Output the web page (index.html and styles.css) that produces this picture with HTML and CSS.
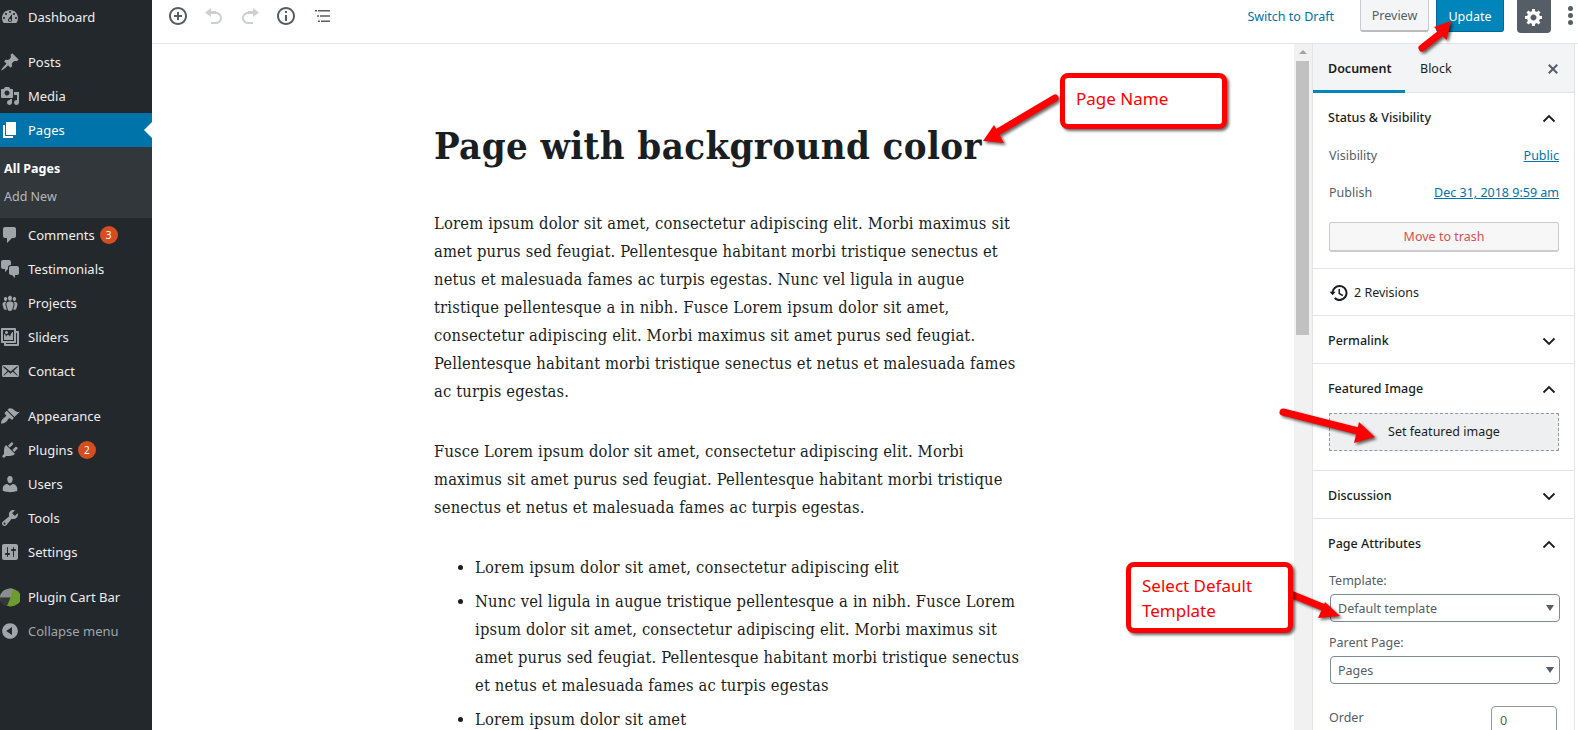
FILE: index.html
```html
<!DOCTYPE html>
<html lang="en">
<head>
<meta charset="utf-8">
<title>Edit Page</title>
<link rel="stylesheet" href="styles.css">
</head>
<body>
<div class="app">
  <nav class="side">
    <a class="mi"><svg class="ic" viewBox="0 0 20 20"><path d="M3.76 16h12.48c1.1-1.37 1.76-3.11 1.76-5 0-4.42-3.58-8-8-8s-8 3.58-8 8c0 1.89.66 3.63 1.76 5zM10 4c.55 0 1 .45 1 1s-.45 1-1 1-1-.45-1-1 .45-1 1-1zM6 6c.55 0 1 .45 1 1s-.45 1-1 1-1-.45-1-1 .45-1 1-1zm8 0c.55 0 1 .45 1 1s-.45 1-1 1-1-.45-1-1 .45-1 1-1zm-5.37 5.55L12 7v6c0 1.1-.9 2-2 2s-2-.9-2-2c0-.57.24-1.08.63-1.45zM4 10c.55 0 1 .45 1 1s-.45 1-1 1-1-.45-1-1 .45-1 1-1zm12 0c.55 0 1 .45 1 1s-.45 1-1 1-1-.45-1-1 .45-1 1-1zm-5 3c0-.55-.45-1-1-1s-1 .45-1 1 .45 1 1 1 1-.45 1-1z"/></svg><span>Dashboard</span></a>
    <a class="mi sep"><svg class="ic" viewBox="0 0 20 20"><path d="M10.44 3.02l1.82-1.82 6.36 6.35-1.83 1.82c-1.05-.68-2.48-.57-3.41.36l-.75.75c-.92.93-1.04 2.35-.35 3.41l-1.83 1.82-2.41-2.41-2.8 2.79c-.42.42-3.38 2.71-3.8 2.29s1.86-3.39 2.28-3.81l2.79-2.79L4.1 9.36l1.83-1.82c1.05.69 2.48.57 3.4-.36l.75-.75c.93-.92 1.05-2.35.36-3.41z"/></svg><span>Posts</span></a>
    <a class="mi"><svg class="ic" viewBox="0 0 20 20"><path d="M13 11V4c0-.55-.45-1-1-1h-1.67L9 1H5L3.67 3H2c-.55 0-1 .45-1 1v7c0 .55.45 1 1 1h10c.55 0 1-.45 1-1zM7 4.5c1.38 0 2.5 1.12 2.5 2.5S8.38 9.5 7 9.5 4.5 8.38 4.5 7 5.62 4.5 7 4.5zM14 6h5v10.5c0 1.38-1.12 2.5-2.5 2.5S14 17.88 14 16.5s1.12-2.5 2.5-2.5c.17 0 .34.02.5.05V9h-3V6zm-4 8.05V13h2v3.5c0 1.38-1.12 2.5-2.5 2.5S7 17.88 7 16.5 8.12 14 9.5 14c.17 0 .34.02.5.05z"/></svg><span>Media</span></a>
    <a class="mi cur"><svg class="ic" viewBox="0 0 20 20"><path d="M6 15V2h10v13H6zm-1 1h8v2H3V5h2v11z"/></svg><span>Pages</span></a>
    <div class="sub"><a class="si on">All Pages</a><a class="si">Add New</a></div>
    <a class="mi"><svg class="ic" viewBox="0 0 20 20"><path d="M5 2h9c1.1 0 2 .9 2 2v7c0 1.1-.9 2-2 2h-2l-5 5v-5H5c-1.1 0-2-.9-2-2V4c0-1.1.9-2 2-2z"/></svg><span>Comments</span><b class="badge">3</b></a>
    <a class="mi"><svg class="ic" viewBox="0 0 20 20"><path d="M11 6h-.82C9.07 6 8 7.2 8 8.16V10l-3 3v-3H3c-1.1 0-2-.9-2-2V3c0-1.1.9-2 2-2h6c1.1 0 2 .9 2 2v3zm0 1h6c1.1 0 2 .9 2 2v5c0 1.1-.9 2-2 2h-2v3l-3-3h-1c-1.1 0-2-.9-2-2V9c0-1.1.9-2 2-2z"/></svg><span>Testimonials</span></a>
    <a class="mi"><svg class="ic" viewBox="0 0 20 20"><path d="M8.03 4.46c-.29 1.28.55 3.46 1.97 3.46 1.41 0 2.25-2.18 1.96-3.46-.22-.98-1.08-1.63-1.96-1.63-.89 0-1.74.65-1.97 1.63zm-4.13.9c-.25 1.08.47 2.93 1.67 2.93s1.92-1.85 1.67-2.93c-.19-.83-.92-1.39-1.67-1.39s-1.48.56-1.67 1.39zm8.86 0c-.25 1.08.47 2.93 1.66 2.93 1.2 0 1.92-1.85 1.67-2.93-.19-.83-.92-1.39-1.67-1.39-.74 0-1.47.56-1.66 1.39zm-.59 11.43l1.25-4.3C14.2 10 12.71 8.47 10 8.47c-2.72 0-4.21 1.53-3.44 4.02l1.26 4.3C8.05 17.51 9 18 10 18c.98 0 1.94-.49 2.17-1.21zm-6.1-7.63c-.49.67-.96 1.83-.42 3.59l1.12 3.79c-.34.2-.77.31-1.2.31-.85 0-1.65-.41-1.85-1.03l-1.07-3.65c-.65-2.11.61-3.4 2.92-3.4.27 0 .54.02.79.06-.1.1-.2.22-.29.33zm8.35-.39c2.31 0 3.58 1.29 2.92 3.4l-1.07 3.65c-.2.62-1 1.03-1.85 1.03-.43 0-.86-.11-1.2-.31l1.11-3.77c.55-1.78.08-2.94-.42-3.61-.08-.11-.18-.23-.28-.33.25-.04.51-.06.79-.06z"/></svg><span>Projects</span></a>
    <a class="mi"><svg class="ic" viewBox="0 0 20 20"><path d="M16 4h1.96c.57 0 1.04.47 1.04 1.04v12.92c0 .57-.47 1.04-1.04 1.04H5.04C4.47 19 4 18.53 4 17.96V16H2.04C1.47 16 1 15.53 1 14.96V2.04C1 1.47 1.47 1 2.04 1h12.92c.57 0 1.04.47 1.04 1.04V4zM3 14h11V3H3v11zm5-8.5C8 4.67 7.33 4 6.5 4S5 4.67 5 5.5 5.67 7 6.5 7 8 6.33 8 5.5zm2 4.5s1-5 3-5v8H4V7c2 0 2 3 2 3s.33-2 2-2 2 2 2 2zm7 7V6h-1v8.96c0 .57-.47 1.04-1.04 1.04H6v1h11z"/></svg><span>Sliders</span></a>
    <a class="mi"><svg class="ic" viewBox="0 0 20 20"><path d="M19 14.5v-9c0-.83-.67-1.5-1.5-1.5H3.49c-.83 0-1.5.67-1.5 1.5v9c0 .83.67 1.5 1.5 1.5H17.5c.83 0 1.5-.67 1.5-1.5zm-1.31-9.11c.33.33.15.67-.03.84L13.6 9.95l3.9 4.06c.12.14.2.36.06.51-.13.16-.43.15-.56.05l-4.37-3.73-2.14 1.95-2.13-1.95-4.37 3.73c-.13.1-.43.11-.56-.05-.14-.15-.06-.37.06-.51l3.9-4.06-4.06-3.72c-.18-.17-.36-.51-.03-.84s.67-.17.95.07l6.24 5.04 6.25-5.04c.28-.24.62-.4.95-.07z"/></svg><span>Contact</span></a>
    <a class="mi sep"><svg class="ic" viewBox="0 0 20 20"><path d="M14.48 11.06L7.41 3.99l1.5-1.5c.5-.56 2.3-.47 3.51.32 1.21.8 1.43 1.28 2.91 2.1 1.18.64 2.45 1.26 4.45.85zm-.71.71L6.7 4.7 4.93 6.47c-.39.39-.39 1.02 0 1.41l1.06 1.06c.39.39.39 1.03 0 1.42-.6.6-1.43 1.11-2.21 1.69-.35.26-.7.53-1.01.84C1.43 13.71 1 16.2 1 17.5c1.3 0 3.79-.43 5.28-1.78.31-.31.58-.66.84-1.01.58-.78 1.09-1.61 1.69-2.21.39-.39 1.03-.39 1.42 0l1.06 1.06c.39.39 1.02.39 1.41 0z"/></svg><span>Appearance</span></a>
    <a class="mi"><svg class="ic" viewBox="0 0 20 20"><path d="M13.11 4.36L9.87 7.6 8 5.73l3.24-3.24c.35-.34 1.05-.2 1.56.32.52.51.66 1.21.31 1.55zm-8 1.77l.91-1.12 9.01 9.01-1.19.84c-.71.71-2.63 1.16-3.82 1.16H6.14L4.9 17.26c-.59.59-1.54.59-2.12 0-.59-.58-.59-1.53 0-2.12l1.24-1.24v-3.88c0-1.13.4-3.19 1.09-3.89zm7.26 3.97l3.24-3.24c.34-.35 1.04-.21 1.55.31.52.51.66 1.21.31 1.55l-3.24 3.25z"/></svg><span>Plugins</span><b class="badge">2</b></a>
    <a class="mi"><svg class="ic" viewBox="0 0 20 20"><path d="M10 9.25c-2.27 0-2.73-3.44-2.73-3.44C7 4.02 7.82 2 9.97 2c2.16 0 2.98 2.02 2.71 3.81 0 0-.41 3.44-2.68 3.44zm0 2.57L12.72 10c2.39 0 4.52 2.33 4.52 4.53v2.49s-3.65 1.13-7.24 1.13c-3.65 0-7.24-1.13-7.24-1.13v-2.49c0-2.25 1.94-4.48 4.47-4.48z"/></svg><span>Users</span></a>
    <a class="mi"><svg class="ic" viewBox="0 0 20 20"><path d="M16.68 9.77c-1.34 1.34-3.3 1.67-4.95.99l-5.41 6.52c-.99.99-2.59.99-3.58 0s-.99-2.59 0-3.57l6.52-5.42c-.68-1.65-.35-3.61.99-4.95 1.28-1.28 3.12-1.62 4.72-1.06l-2.89 2.89 2.82 2.82 2.86-2.87c.53 1.58.18 3.39-1.08 4.65zM3.81 16.21c.4.39 1.04.39 1.43 0 .4-.4.4-1.04 0-1.43-.39-.4-1.03-.4-1.43 0-.39.39-.39 1.03 0 1.43z"/></svg><span>Tools</span></a>
    <a class="mi"><svg class="ic" viewBox="0 0 20 20"><path d="M18 16V4c0-1.1-.9-2-2-2H4c-1.1 0-2 .9-2 2v12c0 1.1.9 2 2 2h12c1.1 0 2-.9 2-2zM8 11h1c.55 0 1 .45 1 1s-.45 1-1 1H8v1.5c0 .28-.22.5-.5.5s-.5-.22-.5-.5V13H6c-.55 0-1-.45-1-1s.45-1 1-1h1V5.5c0-.28.22-.5.5-.5s.5.22.5.5V11zm5-2h-1c-.55 0-1-.45-1-1s.45-1 1-1h1V5.5c0-.28.22-.5.5-.5s.5.22.5.5V7h1c.55 0 1 .45 1 1s-.45 1-1 1h-1v5.5c0 .28-.22.5-.5.5s-.5-.22-.5-.5V9z"/></svg><span>Settings</span></a>
    <a class="mi sep"><svg class="ic" viewBox="0 0 20 20"><ellipse cx="10.500" cy="10.500" rx="10.500" ry="9" fill="#6d9b2f"/><path d="M10.500 10.500 13 1.800A10.500 9 0 0 0 0 10.500z" fill="#8a8e91"/><path d="M0 10.500 10.500 10.500 7 19A10.500 9 0 0 1 0 10.500z" fill="#33373a"/></svg><span>Plugin Cart Bar</span></a>
    <a class="mi dim"><svg class="ic" viewBox="0 0 20 20"><path d="M10 2.160c4.330 0 7.840 3.510 7.840 7.840s-3.510 7.840-7.840 7.840S2.160 14.330 2.160 10 5.710 2.160 10 2.160zm2 11.720V6.120L6.180 9.970z"/></svg><span>Collapse menu</span></a>
  </nav>
  <div class="main">
    <header class="top">
      <div class="tools">
        <svg class="tb" viewBox="0 0 20 20"><path d="M10 1c-5 0-9 4-9 9s4 9 9 9 9-4 9-9-4-9-9-9zm0 16c-3.900 0-7-3.100-7-7s3.100-7 7-7 7 3.100 7 7-3.100 7-7 7zm1-11H9v3H6v2h3v3h2v-3h3V9h-3V6z"/></svg>
        <svg class="tb off" viewBox="0 0 20 20"><path d="M12 5H7V2L1 6.500 7 11V8h5c2.200 0 4 1.800 4 4s-1.800 4-4 4H7v2h5c3.300 0 6-2.700 6-6s-2.700-6-6-6z"/></svg>
        <svg class="tb off" viewBox="0 0 20 20"><path d="M8 5h5V2l6 4.500-6 4.500V8H8c-2.200 0-4 1.800-4 4s1.800 4 4 4h5v2H8c-3.300 0-6-2.700-6-6s2.700-6 6-6z"/></svg>
        <svg class="tb" viewBox="0 0 20 20"><path d="M10 1c-5 0-9 4-9 9s4 9 9 9 9-4 9-9-4-9-9-9zm0 16c-3.900 0-7-3.100-7-7s3.100-7 7-7 7 3.100 7 7-3.100 7-7 7zM11 7V5H9v2h2zm0 8V9H9v6h2z"/></svg>
        <svg class="tb" viewBox="0 0 20 20"><path d="M3 4h2v1.500H3zM6 4h12v1.500H6zM5 9.200h2v1.500H5zM8 9.200h10v1.500H8zM6 14.500h2V16H6zM9 14.500h9V16H9z"/></svg>
      </div>
      <div class="acts">
        <a class="draft">Switch to Draft</a>
        <button class="btn prev">Preview</button>
        <button class="btn upd">Update</button>
        <button class="gear"><svg viewBox="0 0 20 20"><path d="M18 12h-2.180c-.17.7-.44 1.350-.81 1.930l1.540 1.540-2.100 2.100-1.540-1.540c-.58.360-1.230.640-1.910.810V19H8v-2.180c-.68-.170-1.330-.440-1.910-.810l-1.540 1.540-2.120-2.120 1.540-1.540c-.36-.58-.64-1.230-.81-1.910H1V9.030h2.170c.170-.7.440-1.350.81-1.930L2.440 5.560l2.120-2.120 1.540 1.540c.58-.360 1.230-.640 1.910-.810V2h3v2.180c.68.170 1.330.440 1.910.810l1.540-1.540 2.120 2.120-1.540 1.540c.360.580.640 1.230.810 1.910H18V12zm-8.500 1.500c1.660 0 3-1.340 3-3s-1.340-3-3-3-3 1.340-3 3 1.340 3 3 3z"/></svg></button>
        <div class="kebab"><i></i><i></i><i></i></div>
      </div>
    </header>
    <div class="body">
      <main class="editor">
        <div class="col">
          <h1>Page with background color</h1>
          <p>Lorem ipsum dolor sit amet, consectetur adipiscing elit. Morbi maximus sit<br>amet purus sed feugiat. Pellentesque habitant morbi tristique senectus et<br>netus et malesuada fames ac turpis egestas. Nunc vel ligula in augue<br>tristique pellentesque a in nibh. Fusce Lorem ipsum dolor sit amet,<br>consectetur adipiscing elit. Morbi maximus sit amet purus sed feugiat.<br>Pellentesque habitant morbi tristique senectus et netus et malesuada fames<br>ac turpis egestas.</p>
          <p>Fusce Lorem ipsum dolor sit amet, consectetur adipiscing elit. Morbi<br>maximus sit amet purus sed feugiat. Pellentesque habitant morbi tristique<br>senectus et netus et malesuada fames ac turpis egestas.</p>
          <ul>
            <li>Lorem ipsum dolor sit amet, consectetur adipiscing elit</li>
            <li>Nunc vel ligula in augue tristique pellentesque a in nibh. Fusce Lorem<br>ipsum dolor sit amet, consectetur adipiscing elit. Morbi maximus sit<br>amet purus sed feugiat. Pellentesque habitant morbi tristique senectus<br>et netus et malesuada fames ac turpis egestas</li>
            <li>Lorem ipsum dolor sit amet</li>
          </ul>
        </div>
      </main>
      <div class="sbar"><span class="up"></span><span class="thumb"></span></div>
      <aside class="panel">
        <div class="tabs">
          <span class="tab act">Document</span><span class="tab">Block</span>
          <svg class="x" viewBox="0 0 20 20"><path d="M14.950 6.460 11.410 10l3.540 3.540-1.410 1.410L10 11.420l-3.530 3.530-1.420-1.420L8.580 10 5.050 6.470l1.420-1.420L10 8.580l3.540-3.530z"/></svg>
        </div>
        <section class="sec s1">
          <div class="hd"><b>Status &amp; Visibility</b><svg class="chev" viewBox="0 0 14 9"><path d="M1.500 7.500 7 2l5.500 5.500"/></svg></div>
          <div class="row r1"><span>Visibility</span><a>Public</a></div>
          <div class="row r2"><span>Publish</span><a>Dec 31, 2018 9:59 am</a></div>
          <button class="trash">Move to trash</button>
        </section>
        <section class="sec rev">
          <svg class="hist" viewBox="0 0 20 20"><path d="M10.500 2a8 8 0 0 0-7.900 6.800H.6l3 3.500 3-3.500H4.600A6 6 0 1 1 6.400 14.300l-1.400 1.500A8 8 0 1 0 10.500 2zM9.500 6v5l4 2.300.8-1.300-3.300-1.900V6z"/></svg><span>2 Revisions</span>
        </section>
        <section class="sec col1">
          <div class="hd"><b>Permalink</b><svg class="chev" viewBox="0 0 14 9"><path d="M1.500 1.500 7 7l5.500-5.500"/></svg></div>
        </section>
        <section class="sec s2">
          <div class="hd"><b>Featured Image</b><svg class="chev" viewBox="0 0 14 9"><path d="M1.500 7.500 7 2l5.500 5.500"/></svg></div>
          <button class="feat">Set featured image</button>
        </section>
        <section class="sec col1">
          <div class="hd"><b>Discussion</b><svg class="chev" viewBox="0 0 14 9"><path d="M1.500 1.500 7 7l5.500-5.500"/></svg></div>
        </section>
        <section class="sec s3">
          <div class="hd"><b>Page Attributes</b><svg class="chev" viewBox="0 0 14 9"><path d="M1.500 7.500 7 2l5.500 5.500"/></svg></div>
          <label class="lb l1">Template:</label>
          <div class="sel">Default template</div>
          <label class="lb l2">Parent Page:</label>
          <div class="sel">Pages</div>
          <div class="ord"><span>Order</span><div class="num">0</div></div>
        </section>
      </aside>
    </div>
  </div>
</div>
<svg class="arrows" viewBox="0 0 1578 730">
  <g class="arrow">
    <path d="M1422 48 1441 33" class="shaft"/><path d="M1451 21 1446.500 40 1434 27z" class="head"/>
    <path d="M1055 98 996 133" class="shaft"/><path d="M983 141 1004 143 994 125z" class="head"/>
    <path d="M1283 412 1358 431" class="shaft"/><path d="M1375 437 1354 443 1359 422z" class="head"/>
    <path d="M1293 595 1325 608" class="shaft"/><path d="M1340 616 1318 618 1325 602z" class="head"/>
  </g>
</svg>
<div class="call c1">Page Name</div>
<div class="call c2">Select Default<br>Template</div>
</body>
</html>
```
FILE: styles.css
```css
* { box-sizing: border-box; }
html, body { margin: 0; height: 730px; overflow: hidden; background: #fff; }
body { font: 13px/18px "Noto Sans", sans-serif; color: #191e23; position: relative; }
.app { display: flex; height: 730px; }

.side { width: 152px; flex: none; background: #23282d; color: #eee; }
.mi { display: flex; align-items: center; height: 34px; color: #eee; font-size: 13px; position: relative; }
.mi.sep { margin-top: 11px; }
.ic { width: 20px; height: 20px; fill: #a0a5aa; flex: none; margin-right: 8px; }
.cur { background: #0073aa; color: #fff; }
.cur .ic { fill: #fff; }
.cur::after { content: ""; position: absolute; right: 0; top: 9px; border: 8px solid transparent; border-right-color: #fff; border-left-width: 0; }
.dim { color: #a0a5aa; }
.sub { background: #32373c; padding: 8px 0 7px; }
.si { display: block; height: 28px; line-height: 28px; padding-left: 4px; font-size: 12.500px; color: #b4b9be; }
.si.on { color: #fff; font-weight: 700; }
.badge { width: 18px; height: 18px; border-radius: 50%; background: #d54e21; color: #fff; font: 400 10px/18px "Noto Sans", sans-serif; text-align: center; margin-left: 5px; }

.main { flex: 1; min-width: 0; display: flex; flex-direction: column; }
.top { height: 44px; flex: none; border-bottom: 1px solid #e2e4e7; display: flex; justify-content: space-between; }
.tools { display: flex; gap: 16px; padding: 6px 0 0 16px; }
.tb { width: 20px; height: 20px; fill: #555d66; }
.tb.off { fill: #ccd0d4; }
.acts { display: flex; align-items: flex-start; }
.draft { color: #0073aa; margin: 8px 26px 0 0; font-size: 12.500px; }
.btn { font: 12.500px/18px "Noto Sans", sans-serif; height: 32px; border-radius: 0 0 3px 3px; padding: 2px 0 0; }
.prev { width: 69px; background: #f3f5f6; border: 1px solid #ccc; border-top: 0; border-bottom: 2px solid #bbb; color: #555d66; margin-right: 7px; }
.upd { width: 68px; background: #0085ba; border: 1px solid #006799; border-top: 0; color: #fff; margin-right: 13px; }
.gear { width: 34px; height: 33px; background: #555d66; border: 0; border-radius: 0 0 4px 4px; padding: 6px 7px; }
.gear svg { width: 20px; height: 20px; fill: #fff; display: block; }
.kebab { width: 27px; display: flex; flex-direction: column; align-items: center; gap: 2px; padding: 6px 0 0 11px; }
.kebab i { width: 5px; height: 5px; border-radius: 50%; background: #555d66; }

.body { flex: 1; display: flex; min-height: 0; }
.editor { flex: 1; min-width: 0; overflow: hidden; }
.col { width: 610px; margin: 0 auto; padding: 0 14px 0 16px; font: 16.400px/28px "DejaVu Serif", serif; font-stretch: condensed; letter-spacing: .17px; color: #191e23; white-space: nowrap; }
.col h1 { font: 700 38px/44px "DejaVu Serif", serif; font-stretch: condensed; letter-spacing: .4px; margin: 80px 0 42px; padding: 0; }
.col p { margin: 0 0 32px; }
.col ul { margin: 0; padding: 0 0 0 41px; }
.col li { margin-bottom: 6px; }

.sbar { width: 18px; flex: none; background: #f1f1f1; position: relative; padding: 0 2px 0; }
.up { display: block; margin: 6px auto 0; width: 0; border: 4px solid transparent; border-top: 0; border-bottom: 4px solid #a3a3a3; }
.thumb { display: block; height: 274px; margin-top: 7px; background: #c1c1c1; width: 13px; }

.panel { width: 263px; flex: none; margin-right: 3px; border-left: 1px solid #e2e4e7; border-right: 1px solid #e2e4e7; font-size: 12.500px; overflow: hidden; }
.tabs { height: 49px; background: #f3f4f5; border-bottom: 1px solid #e2e4e7; display: flex; position: relative; }
.tab { width: 92px; text-align: left; padding: 16px 0 0 15px; color: #191e23; }
.tab.act { font-weight: 600; border-bottom: 3px solid #0085ba; height: 49px; }
.x { width: 20px; height: 20px; fill: #555d66; position: absolute; right: 11px; top: 15px; }
.sec { border-bottom: 1px solid #e2e4e7; padding: 0 16px; }
.hd { display: flex; justify-content: space-between; align-items: center; height: 48px; padding-top: 2px; margin: 0 2px 0 -1px; }
.hd b { font-weight: 500; }
.chev { width: 14px; height: 9px; fill: none; stroke: #191e23; stroke-width: 1.800; }
.s1 { height: 176px; }
.row { display: flex; justify-content: space-between; color: #555d66; margin-right: -1px; }
.row a { color: #0073aa; text-decoration: underline; }
.r1 { margin-top: 6px; }
.r2 { margin-top: 19px; }
.trash { display: block; width: 230px; height: 30px; margin-top: 20px; background: #f7f7f7; border: 1px solid #ccc; border-bottom-width: 2px; border-radius: 3px; color: #d94f4f; font: 12.500px/18px "Noto Sans", sans-serif; padding: 0; }
.rev { height: 47px; display: flex; align-items: center; gap: 5px; padding-top: 2px; }
.hist { width: 20px; height: 20px; fill: #191e23; }
.col1 { height: 48px; }
.s2 { height: 107px; }
.feat { display: block; width: 230px; height: 38px; background: #edeff0; border: 1px dashed #8f98a1; color: #191e23; font: 12.500px/18px "Noto Sans", sans-serif; padding: 0; margin-top: 1px; }
.s3 { height: 220px; }
.lb { display: block; color: #555d66; }
.l1 { margin-top: 5px; }
.l2 { margin-top: 12px; }
.sel { width: 230px; height: 28px; margin: 4px 0 0 1px; border: 1px solid #7e8993; border-radius: 4px; padding: 5px 0 0 7px; color: #555d66; position: relative; }
.sel::after { content: ""; position: absolute; right: 5px; top: 10px; border: 4px solid transparent; border-bottom: 0; border-top: 6px solid #555d66; }
.ord { display: flex; justify-content: space-between; align-items: flex-start; margin-top: 22px; color: #555d66; }
.ord span { margin-top: 3px; }
.num { width: 66px; height: 32px; border: 1px solid #8d96a0; border-radius: 4px; padding: 5px 0 0 8px; margin-right: 1px; }

.arrows { position: absolute; left: 0; top: 0; width: 1578px; height: 730px; pointer-events: none; }
.arrow { filter: drop-shadow(2px 2px 1.500px rgba(0,0,0,.6)); }
.shaft { stroke: #f00; stroke-width: 7; stroke-linecap: round; fill: none; }
.head { fill: #f00; }
.call { position: absolute; background: #fff; border: 5px solid #f00; border-radius: 8px; color: #f00; font: 17px/25px "Noto Sans", sans-serif; box-shadow: 2px 2px 3px rgba(0,0,0,.6); padding: 8px 0 0 11px; }
.c1 { left: 1060px; top: 73px; width: 167px; height: 56px; }
.c2 { left: 1126px; top: 562px; width: 167px; height: 71px; padding-top: 6px; }
```
